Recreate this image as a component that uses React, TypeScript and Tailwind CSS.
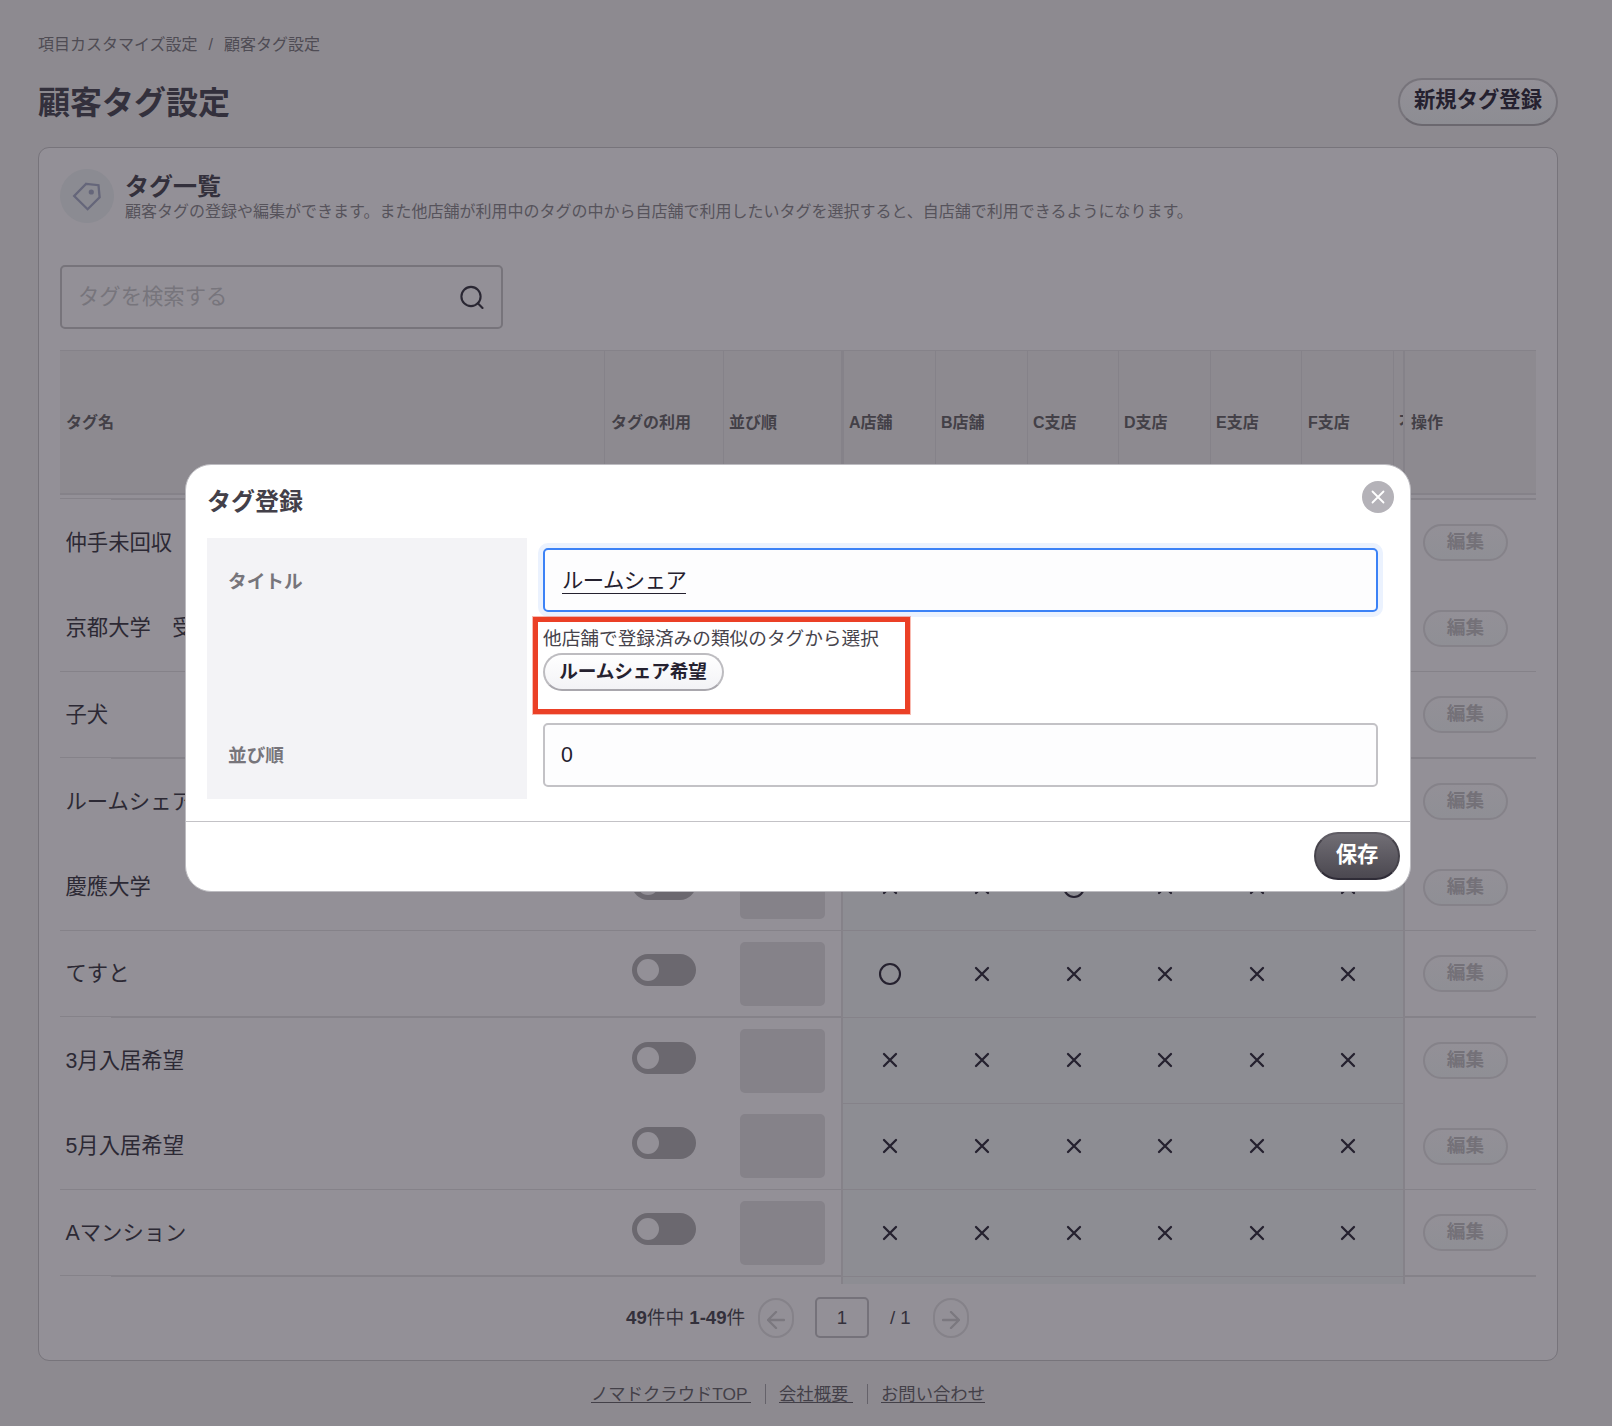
import React from "react";

const ROWS = [
  { name: "仲手未回収", marks: "xxxxxx" },
  { name: "京都大学　受験", marks: "xxxxxx" },
  { name: "子犬", marks: "xxxxxx" },
  { name: "ルームシェア希望", marks: "xxxxxx" },
  { name: "慶應大学", marks: "xxoxxx" },
  { name: "てすと", marks: "oxxxxx" },
  { name: "3月入居希望", marks: "xxxxxx" },
  { name: "5月入居希望", marks: "xxxxxx" },
  { name: "Aマンション", marks: "xxxxxx" },
];

const STORES = ["A店舗", "B店舗", "C支店", "D支店", "E支店", "F支店"];
const STORE_WIDTHS = ["w-[92px]", "w-[92px]", "w-[91px]", "w-[92px]", "w-[91px]", "w-[92px]"];
const STORE_PAD = ["pl-[5px]", "pl-[5px]", "pl-[5px]", "pl-[5px]", "pl-[5px]", "pl-[6px]"];

const SIDE_HEIGHTS = ["h-[85px]", "h-[87px]", "h-[87px]"];
const STORE_HEIGHTS = ["h-[86px] pb-[2px]", "h-[86px] pb-[2px]", "h-[87px]"];

function ThickRule() {
  return (
    <div className="flex h-[2px] shrink-0 items-start">
      <div className="h-px w-[51px] bg-[#858289]" />
      <div className="h-[2px] flex-1 bg-[#858289]" />
    </div>
  );
}

function Mark({ kind }: { kind: string }) {
  return kind === "o" ? (
    <svg width="24" height="24" viewBox="0 0 24 24" fill="none" stroke="#25212f" strokeWidth="2.1">
      <circle cx="12" cy="12" r="10" />
    </svg>
  ) : (
    <svg width="24" height="24" viewBox="0 0 24 24" fill="none" stroke="#25212f" strokeWidth="2.3" strokeLinecap="round">
      <path d="M6 6l12 12M18 6L6 18" />
    </svg>
  );
}

function Table() {
  return (
    <div className="mt-[21px] flex h-[934px] border-t border-[#858289]">
      <div className="flex w-[781px] flex-col">
        <div className="flex h-[144px] border-b-2 border-[#858289] bg-[#8d8a90] pt-[2px] text-[16px] font-bold text-[#434047]">
          <div className="-mt-[2px] flex w-[545px] items-center border-r border-[#858289] pl-[6px] pt-[2px]">タグ名</div>
          <div className="-mt-[2px] flex w-[119px] items-center border-r border-[#858289] pl-[6px] pt-[2px]">タグの利用</div>
          <div className="-mt-[2px] flex flex-1 items-center pl-[5px] pt-[2px]">並び順</div>
        </div>
        <div className="h-[3px]" />
        <ThickRule />
        {ROWS.map((row, i) => (
          <div key={row.name} className={`flex shrink-0 flex-col ${SIDE_HEIGHTS[i % 3]}`}>
            <div className="flex flex-1 items-center">
              <div className="w-[572px] pl-[5.500px] text-[21.33px] leading-[32px] text-[#2c2934]">{row.name}</div>
              <div className={i % 3 === 0 ? "w-[108px] pb-[5px]" : "w-[108px] pb-[7px]"}>
                <div className="flex h-[32px] w-[64px] items-center rounded-full bg-[#6b686f] pl-[5px]">
                  <div className="size-[22px] rounded-full bg-[#939097]" />
                </div>
              </div>
              <div className="h-[64px] w-[85px] rounded-[5px] bg-[#858289]" />
            </div>
            {i % 3 === 1 && <div className="h-px bg-[#858289]" />}
            {i % 3 === 2 && <ThickRule />}
          </div>
        ))}
      </div>

      <div className="flex w-[564px] flex-col overflow-hidden border-x-2 border-[#858289] bg-[#8d8d93]">
        <div className="flex h-[144px] shrink-0 border-b-2 border-l border-[#858289] bg-[#8d8a90] text-[16px] font-bold text-[#434047]">
          {STORES.map((store, i) => (
            <div
              key={store}
              className={`flex shrink-0 items-center border-r border-[#858289] pt-[2px] ${STORE_WIDTHS[i]} ${STORE_PAD[i]}`}
            >
              {store}
            </div>
          ))}
          <div className="flex w-[9px] shrink-0 items-center overflow-hidden whitespace-nowrap pl-[5px] pt-[2px]">不</div>
        </div>
        <div className="h-[5px] shrink-0" />
        {ROWS.map((row, i) => (
          <div
            key={row.name}
            className={`flex shrink-0 items-center border-b border-[#858289] pl-px ${STORE_HEIGHTS[i % 3]}`}
          >
            {row.marks.split("").map((kind, j) => (
              <div key={j} className={`flex shrink-0 justify-center ${STORE_WIDTHS[j]}`}>
                <Mark kind={kind} />
              </div>
            ))}
          </div>
        ))}
      </div>

      <div className="flex flex-1 flex-col">
        <div className="flex h-[144px] items-center border-b-2 border-[#858289] bg-[#8d8a90] pl-[6px] pt-[2px] text-[16px] font-bold text-[#434047]">
          操作
        </div>
        <div className="h-[3px]" />
        <div className="h-[2px] bg-[#858289]" />
        {ROWS.map((row, i) => (
          <div key={row.name} className={`flex shrink-0 flex-col ${SIDE_HEIGHTS[i % 3]}`}>
            <div className="flex flex-1 items-center pl-[18px]">
              <button className="flex h-[37px] w-[85px] items-center justify-center rounded-full border-2 border-[#858289] bg-linear-to-b from-[#939097] to-[#8f8f95] text-[18.67px] font-bold leading-none text-[#747178]">
                編集
              </button>
            </div>
            {i % 3 === 1 && <div className="h-px bg-[#858289]" />}
            {i % 3 === 2 && <div className="h-[2px] bg-[#858289]" />}
          </div>
        ))}
      </div>
    </div>
  );
}

function Pagination() {
  return (
    <div className="mt-[13px] flex h-[41px] items-center pl-[566px] text-[18.67px] leading-none text-[#33303b]">
      <span className="w-[132px] whitespace-nowrap pt-[2px]">
        <b>49</b>件中 <b>1-49</b>件
      </span>
      <button className="flex h-[40px] w-[36px] items-center justify-center rounded-full border-2 border-[#858289] pt-[4px]">
        <svg width="18" height="18" viewBox="0 0 18 18" fill="none" stroke="#7b787f" strokeWidth="2.3" strokeLinecap="round" strokeLinejoin="round">
          <path d="M17 9H1M9 1L1 9l8 8" />
        </svg>
      </button>
      <div className="ml-[21px] flex h-[41px] w-[54px] items-center justify-center rounded-[5px] border-2 border-[#75727a] pt-px">1</div>
      <span className="ml-[21px] w-[43px] pt-[2px]">/ 1</span>
      <button className="flex h-[40px] w-[36px] items-center justify-center rounded-full border-2 border-[#858289] pt-[4px]">
        <svg width="18" height="18" viewBox="0 0 18 18" fill="none" stroke="#7b787f" strokeWidth="2.3" strokeLinecap="round" strokeLinejoin="round">
          <path d="M1 9h16M9 1l8 8-8 8" />
        </svg>
      </button>
    </div>
  );
}

function TagModal() {
  return (
    <div className="absolute left-[185px] top-[464px] flex h-[428px] w-[1226px] flex-col rounded-[26px] border border-[#bdbcc1] bg-white">
      <div className="flex h-[73px] items-start justify-between pl-[21px] pr-[16px] pt-[16px]">
        <h2 className="pt-[5px] text-[24px] font-bold leading-[32px] text-[#434049]">タグ登録</h2>
        <button className="flex size-[32px] items-center justify-center rounded-full bg-[#b4b2b8]">
          <svg width="14" height="14" viewBox="0 0 14 14" fill="none" stroke="#ffffff" strokeWidth="1.8" strokeLinecap="round">
            <path d="M1.5 1.5l11 11M12.500 1.500l-11 11" />
          </svg>
        </button>
      </div>
      <div className="flex pl-[21px]">
        <div className="h-[261px] w-[320px] bg-[#f3f3f6] pl-[21px] text-[18.67px] font-bold leading-[28px] text-[#77757b]">
          <div className="mt-[30px]">タイトル</div>
          <div className="mt-[146px]">並び順</div>
        </div>
        <div className="ml-[16px] w-[835px] pt-[10px]">
          <div className="flex h-[64px] items-center rounded-[5px] border-2 border-[#3c82f6] bg-[#fdfdfe] pl-[17px] shadow-[0_0_0_5px_#ebf2fe]">
            <span className="border-b border-[#25212f] pt-[2px] text-[21.33px] leading-[24px] tracking-[-0.5px] text-[#25212f]">ルームシェア</span>
          </div>
          <div className="relative h-[111px] pt-[13px]">
            <p className="text-[18.67px] leading-[28px] text-[#46434b]">他店舗で登録済みの類似のタグから選択</p>
            <button className="flex h-[38px] w-[181px] items-center justify-center rounded-full border-2 border-b-[#a9a7ad] border-[#bdbcc0] bg-linear-to-b from-white to-[#f3f3f6] pr-px pt-px text-[18.67px] font-bold leading-none tracking-[-0.15px] text-[#25212f]">
              ルームシェア希望
            </button>
            <div className="absolute left-[-10px] top-[5px] h-[97px] w-[377px] border-[5px] border-[#eb4026] shadow-[0_0_0_1px_#eb402659]" />
          </div>
          <div className="flex h-[64px] items-center rounded-[5px] border-2 border-[#c3c2c6] bg-[#fdfdfe] pl-[16px] pt-[2px] text-[21.33px] leading-none text-[#25212f]">
            0
          </div>
        </div>
      </div>
      <div className="mt-[22px] flex h-[70px] justify-end border-t border-[#c3c2c6] pr-[10px] pt-[10px]">
        <button className="flex h-[48px] w-[86px] items-center justify-center rounded-full border-2 border-b-[#2f2c37] border-l-[#46434b] border-r-[#46434b] border-t-[#5f5c64] bg-linear-to-b from-[#716e75] to-[#4b4850] pb-px text-[21.33px] font-bold leading-none text-white">
          保存
        </button>
      </div>
    </div>
  );
}

export default function App() {
  return (
    <div className="relative h-[1426px] w-[1612px] overflow-hidden bg-[#8d8a90] font-['Liberation_Sans','Noto_Sans_CJK_JP',sans-serif]">
      <div className="w-[1558px] pl-[38px]">
        <nav className="flex gap-[11px] pt-[33px] text-[16px] leading-[24px] text-[#4f4c54]">
          <span>項目カスタマイズ設定</span>
          <span>/</span>
          <span>顧客タグ設定</span>
        </nav>
        <div className="mt-[21px] flex h-[48px] items-center justify-between">
          <h1 className="pt-[2px] text-[32px] font-bold leading-[48px] text-[#33303c]">顧客タグ設定</h1>
          <button className="flex h-[48px] w-[160px] items-center justify-center rounded-full border-2 border-b-[#6b686f] border-[#77747b] bg-linear-to-b from-[#939097] to-[#8d8d93] pb-[2px] text-[21.33px] font-bold leading-none text-[#25212f]">
            新規タグ登録
          </button>
        </div>

        <main className="mt-[21px] h-[1214px] rounded-[11px] border border-[#77747b] bg-[#939097] px-[21px] pt-[21px]">
          <div className="flex h-[54px] items-start">
            <div className="flex size-[54px] items-center justify-center rounded-full bg-[#8b8b92]">
              <svg width="30" height="30" viewBox="0 0 30 30" fill="none" stroke="#65667a" strokeWidth="2.3" strokeLinejoin="miter">
                <path d="M14.200 2.800L26.500 4.200L27.600 16.200L15.600 28.200L2.200 15Z" />
                <circle cx="19.300" cy="11" r="2.600" fill="#65667a" stroke="none" />
              </svg>
            </div>
            <div className="ml-[11px] pt-[2px]">
              <h2 className="text-[24px] font-bold leading-[31px] text-[#33303c]">タグ一覧</h2>
              <p className="text-[16px] leading-[20px] text-[#56535b]">
                顧客タグの登録や編集ができます。また他店舗が利用中のタグの中から自店舗で利用したいタグを選択すると、自店舗で利用できるようになります。
              </p>
            </div>
          </div>
          <div className="mt-[42px] flex h-[64px] w-[443px] items-center justify-between rounded-[5px] border-2 border-[#77747b] pl-[16px] pr-[17px]">
            <span className="text-[21.33px] leading-[32px] text-[#77757c]">タグを検索する</span>
            <svg width="24" height="24" viewBox="0 0 24 24" fill="none" stroke="#2a2733" strokeWidth="2.1" strokeLinecap="round">
              <circle cx="11" cy="11.500" r="9.600" />
              <path d="M17.800 18.300L22.500 23" />
            </svg>
          </div>
          <Table />
          <Pagination />
        </main>

        <footer className="mt-[18px] flex h-[30px] items-center pl-[553px] text-[17.33px] text-[#434048]">
          <a className="h-[18px] w-[160px] whitespace-pre border-b border-[#434048] leading-[19px]">ノマドクラウドTOP </a>
          <div className="ml-[14px] h-[20px] w-px bg-[#65626a]" />
          <a className="ml-[13px] h-[18px] w-[74px] whitespace-pre border-b border-[#434048] leading-[19px]">会社概要 </a>
          <div className="ml-[14px] h-[20px] w-px bg-[#65626a]" />
          <a className="ml-[13px] h-[18px] border-b border-[#434048] leading-[19px]">お問い合わせ</a>
        </footer>
      </div>
      <TagModal />
    </div>
  );
}
